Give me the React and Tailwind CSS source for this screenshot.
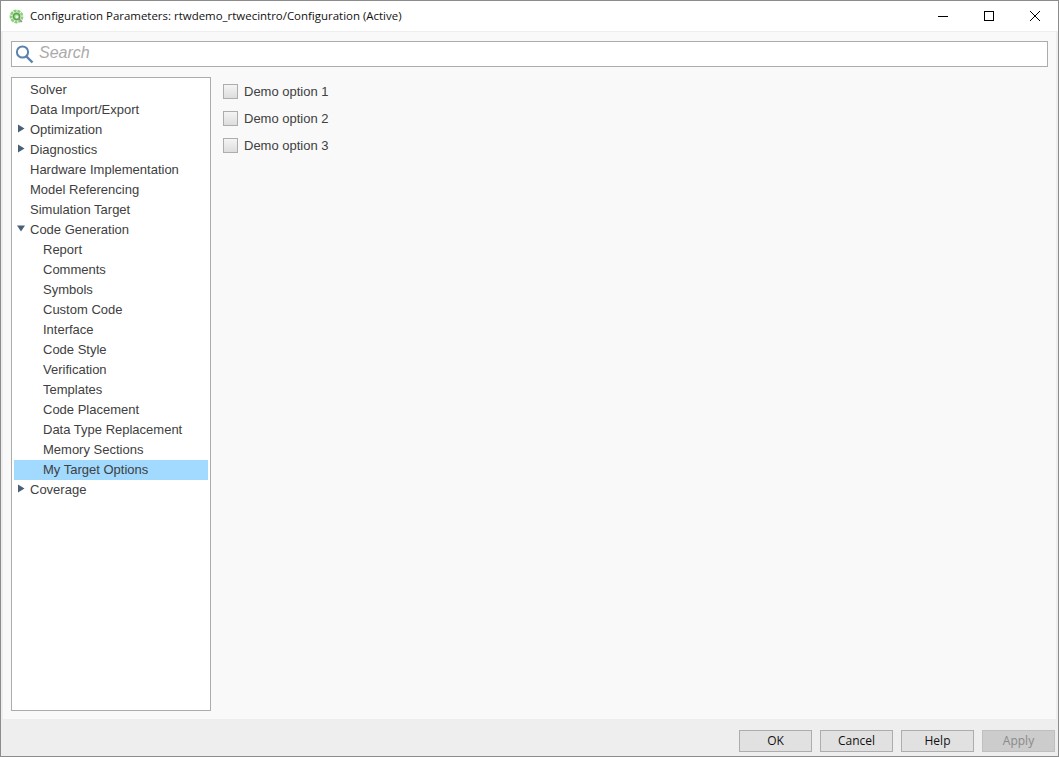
import React from 'react'

const treeRows = [
  { label: 'Solver', depth: 0 },
  { label: 'Data Import/Export', depth: 0 },
  { label: 'Optimization', depth: 0, arrow: 'right' },
  { label: 'Diagnostics', depth: 0, arrow: 'right' },
  { label: 'Hardware Implementation', depth: 0 },
  { label: 'Model Referencing', depth: 0 },
  { label: 'Simulation Target', depth: 0 },
  { label: 'Code Generation', depth: 0, arrow: 'down' },
  { label: 'Report', depth: 1 },
  { label: 'Comments', depth: 1 },
  { label: 'Symbols', depth: 1 },
  { label: 'Custom Code', depth: 1 },
  { label: 'Interface', depth: 1 },
  { label: 'Code Style', depth: 1 },
  { label: 'Verification', depth: 1 },
  { label: 'Templates', depth: 1 },
  { label: 'Code Placement', depth: 1 },
  { label: 'Data Type Replacement', depth: 1 },
  { label: 'Memory Sections', depth: 1 },
  { label: 'My Target Options', depth: 1, selected: true },
  { label: 'Coverage', depth: 0, arrow: 'right' },
]

const AppIcon = () => (
  <svg width="16" height="16" viewBox="0 0 16 16" className="mt-[1px]">
    <circle cx="7.5" cy="7.5" r="5.6" fill="none" stroke="#8ccf7a" strokeWidth="2.6" strokeDasharray="3 0.8" />
    <circle cx="7.5" cy="7.5" r="4.4" fill="#a9dd9a" />
    <circle cx="7.5" cy="7.5" r="3" fill="none" stroke="#5f9f58" strokeWidth="1.5" />
    <circle cx="8" cy="8" r="1.4" fill="#e6f3e0" />
    <path d="M9 9 L13 13" stroke="#8a9a88" strokeWidth="1.6" />
  </svg>
)

const Arrow = ({ dir }) => (
  <svg width="9" height="9" viewBox="0 0 9 9" className="absolute left-[3px] top-[4px]">
    {dir === 'right' ? (
      <path d="M1 0.5 L7.5 4.5 L1 8.5 Z" fill="#4a6079" />
    ) : (
      <path d="M0 1.5 H8 L4 7.5 Z" fill="#4a6079" />
    )}
  </svg>
)

const TreeRow = ({ row }) => (
  <div
    className={`relative h-5 leading-5 whitespace-nowrap ${row.depth === 1 ? 'pl-[29px]' : 'pl-[16px]'} ${
      row.selected ? 'bg-[#a1d9ff]' : ''
    }`}
  >
    {row.arrow && <Arrow dir={row.arrow} />}
    {row.label}
  </div>
)

const FooterButton = ({ label, disabled }) => (
  <button
    className={`h-[22px] w-[73px] border font-['Open_Sans',sans-serif] text-[12px] leading-none ${
      disabled
        ? 'bg-[#cccccc] border-[#bfbfbf] text-[#8a8a8a]'
        : 'bg-[#e1e1e1] border-[#adadad] text-[#111111]'
    }`}
  >
    {label}
  </button>
)

const App = () => {
  return (
    <div className="w-[1059px] h-[757px] flex flex-col overflow-hidden bg-[#eeeeee] border border-[#8c8c8c] font-['Liberation_Sans',Arial,sans-serif] text-[13px] text-[#404040]">
      {/* Title bar */}
      <div className="h-[30px] shrink-0 bg-white flex items-center pl-[8px]">
        <AppIcon />
        <span className="ml-[5px] text-[11.46px] text-[#111111] font-['Open_Sans',sans-serif]">
          Configuration Parameters: rtwdemo_rtwecintro/Configuration (Active)
        </span>
        <div className="ml-auto flex items-center text-black">
          <svg width="46" height="30" viewBox="0 0 46 30">
            <path d="M18 15.5 H28" stroke="#000" strokeWidth="1" />
          </svg>
          <svg width="46" height="30" viewBox="0 0 46 30">
            <rect x="18.5" y="10.5" width="9" height="9" fill="none" stroke="#000" />
          </svg>
          <svg width="46" height="30" viewBox="0 0 46 30">
            <path d="M18 10 L28 20 M28 10 L18 20" stroke="#000" strokeWidth="1" />
          </svg>
        </div>
      </div>

      {/* Main panel */}
      <div className="h-[687px] shrink-0 mt-[1px] mx-[2px] bg-[#f9f9f9] flex flex-col pt-[9px] pl-[8px]">
        <div className="h-[26px] w-[1037px] shrink-0 bg-white border border-[#acacac] flex items-center pl-[3px]">
          <svg width="20" height="20" viewBox="0 0 20 20">
            <circle cx="7.5" cy="8" r="5.6" fill="none" stroke="#5a82ad" strokeWidth="2" />
            <path d="M11.5 12.5 L17.5 18.5" stroke="#5a82ad" strokeWidth="2.4" />
          </svg>
          <span className="ml-[4px] -mt-[2px] text-[16px] italic text-[#ababab]">Search</span>
        </div>

        <div className="flex mt-[10px]">
          <div className="w-[200px] h-[634px] shrink-0 bg-white border border-[#acacac] pt-[2px] px-[2px]">
            {treeRows.map((row) => (
              <TreeRow key={row.label} row={row} />
            ))}
          </div>
          <div className="ml-[12px] pt-[7px] flex flex-col gap-[12px]">
            {['Demo option 1', 'Demo option 2', 'Demo option 3'].map((label) => (
              <label key={label} className="flex items-center h-[15px]">
                <span className="w-[15px] h-[15px] border border-[#adadad] bg-gradient-to-b from-[#f4f4f4] to-[#dddddd]" />
                <span className="ml-[6px]">{label}</span>
              </label>
            ))}
          </div>
        </div>
      </div>

      {/* Footer */}
      <div className="flex-1 flex items-start justify-end gap-[8px] pt-[11px] pr-[3px]">
        <FooterButton label="OK" />
        <FooterButton label="Cancel" />
        <FooterButton label="Help" />
        <FooterButton label="Apply" disabled />
      </div>
    </div>
  )
}

export default App
